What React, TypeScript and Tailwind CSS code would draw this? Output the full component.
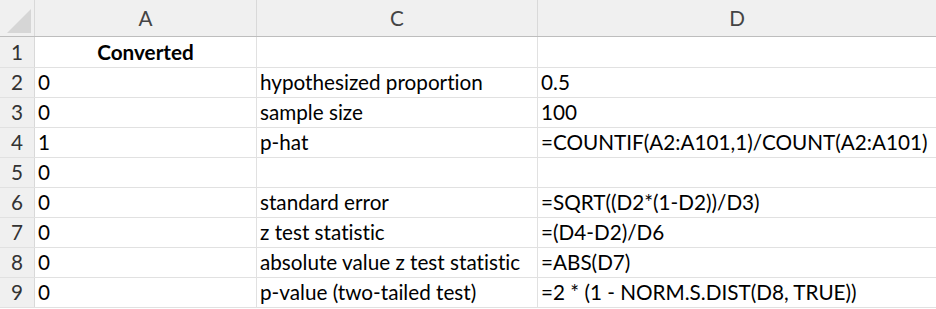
import React from 'react';

const rows: { n: number; a: string; c: string; d: string; bold?: boolean }[] = [
  { n: 1, a: 'Converted', c: '', d: '', bold: true },
  { n: 2, a: '0', c: 'hypothesized proportion', d: '0.5' },
  { n: 3, a: '0', c: 'sample size', d: '100' },
  { n: 4, a: '1', c: 'p-hat', d: '=COUNTIF(A2:A101,1)/COUNT(A2:A101)' },
  { n: 5, a: '0', c: '', d: '' },
  { n: 6, a: '0', c: 'standard error', d: '=SQRT((D2*(1-D2))/D3)' },
  { n: 7, a: '0', c: 'z test statistic', d: '=(D4-D2)/D6' },
  { n: 8, a: '0', c: 'absolute value z test statistic', d: '=ABS(D7)' },
  { n: 9, a: '0', c: 'p-value (two-tailed test)', d: '=2 * (1 - NORM.S.DIST(D8, TRUE))' },
];

export default function App() {
  return (
    <div className="w-[936px] h-[309px] overflow-hidden bg-white text-black font-['Lato',sans-serif] text-[20.7px] leading-none [font-variant-ligatures:none]">
      {/* column headers */}
      <div className="grid grid-cols-[35px_222px_281px_1fr] h-[37px] bg-[#f0f0f0] border-b border-[#bdbdbd] text-[#444]">
        <div className="relative border-r border-[#d9d9d9]">
          <div className="absolute right-[3px] bottom-[3px] w-0 h-0 border-l-[24px] border-l-transparent border-b-[24px] border-b-[#d6d6d6]" />
        </div>
        <div className="flex items-center justify-center border-r border-[#d9d9d9]">A</div>
        <div className="flex items-center justify-center border-r border-[#d9d9d9]">C</div>
        <div className="flex items-center justify-center">D</div>
      </div>
      {rows.map((r, i) => (
        <div
          key={r.n}
          className={`grid grid-cols-[35px_222px_281px_1fr] border-b border-[#e1e1e1] ${i === 0 ? 'h-[31px]' : 'h-[30px]'}`}
        >
          <div className="flex items-center justify-center bg-[#f0f0f0] border-r border-[#d9d9d9] text-[#333]">{r.n}</div>
          <div
            className={`flex items-center border-r border-[#e1e1e1] ${r.bold ? 'justify-center font-bold' : 'pl-[3px]'}`}
          >
            {r.a}
          </div>
          <div className="flex items-center pl-[3px] border-r border-[#e1e1e1] whitespace-nowrap">{r.c}</div>
          <div className="flex items-center pl-[3px] whitespace-nowrap">{r.d}</div>
        </div>
      ))}
    </div>
  );
}
